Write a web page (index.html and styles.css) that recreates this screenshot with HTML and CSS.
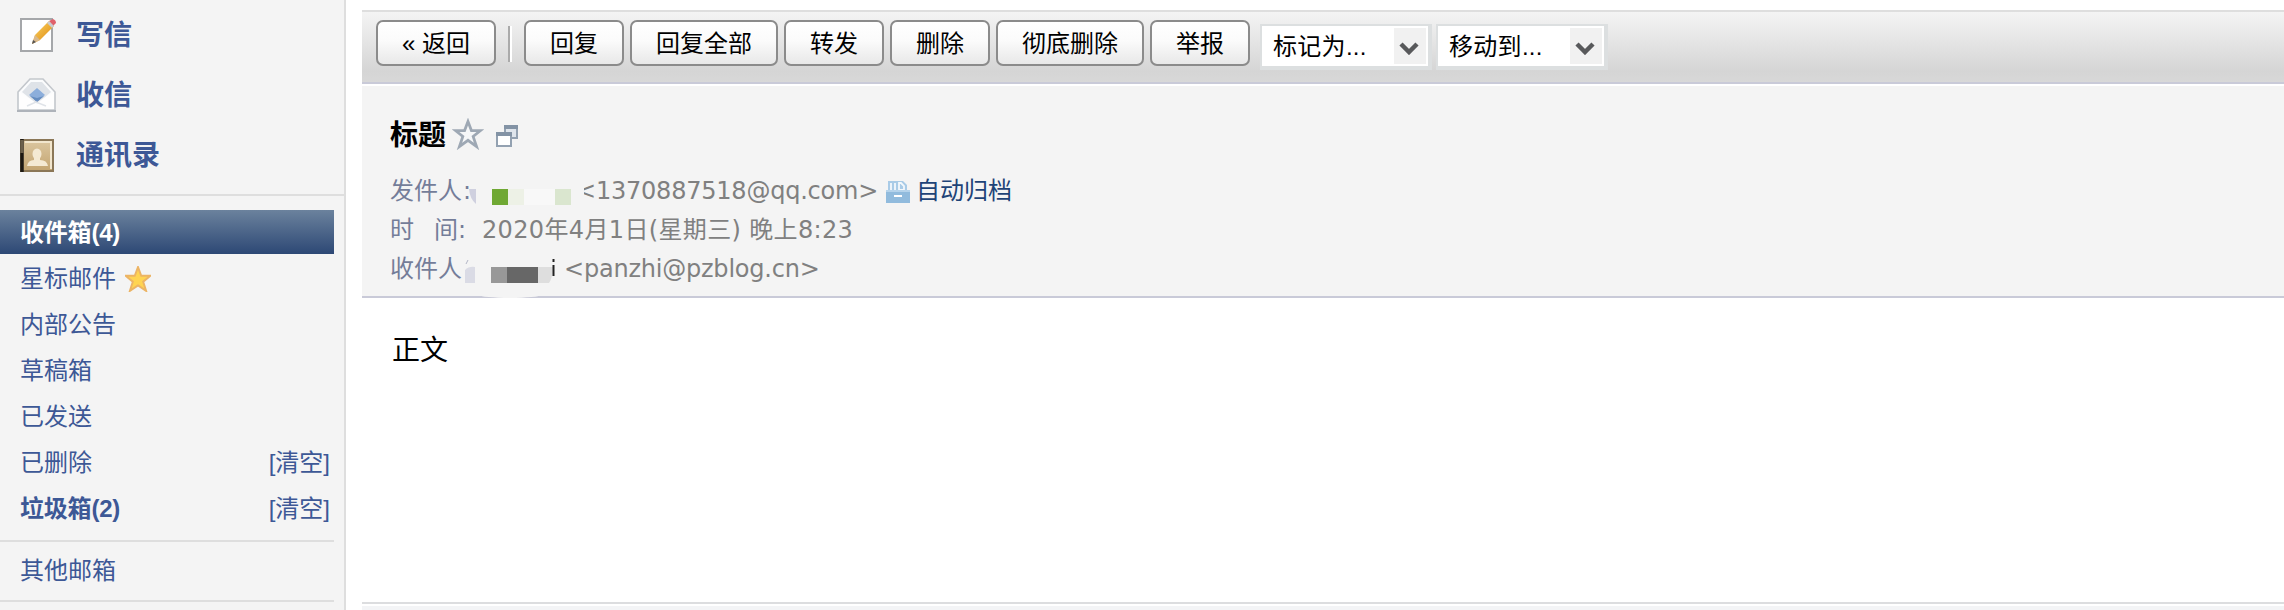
FILE: index.html
```
<!DOCTYPE html>
<html lang="zh-CN">
<head>
<meta charset="utf-8">
<title>收件箱</title>
<link rel="stylesheet" href="styles.css">
</head>
<body>
<div class="app">
  <aside class="sidebar">
    <nav class="actions">
      <a class="action"><svg class="action-icon" viewBox="0 0 40 40">
        <defs><linearGradient id="pencil" x1="0" y1="0" x2="1" y2="1"><stop offset="0" stop-color="#ffd968"/><stop offset="1" stop-color="#d98208"/></linearGradient></defs>
        <rect x="4" y="5" width="31" height="32" fill="#fff" stroke="#a5a7aa" stroke-width="2"/>
        <path d="M15 30l3-9L32 7l5 5-14 14z" fill="url(#pencil)"/><path d="M15 30l3-9 5 5z" fill="#d9b98c"/><path d="M15 30l1-4 3 2z" fill="#555"/><path d="M32 7l4-2q3 1 3 4l-3 3z" fill="#e0616b"/><path d="M30 9l2-2 5 5-2 2z" fill="#c8ccd2"/>
      </svg><span>写信</span></a>
      <a class="action"><svg class="action-icon" viewBox="0 0 40 40">
        <path d="M1 18L13 5h13l12 13v18H1z" fill="#fbfcfd" stroke="#c3c7cc" stroke-width="1.6"/>
        <path d="M5 18l9-10h11l9 10-14 12z" fill="#dfe3e8"/><path d="M13 22l7 6 7-6-7 3z" fill="#577fb4"/>
        <path d="M2 18l17 11 18-11v17H2z" fill="#fff" opacity=".65"/><path d="M12 21l8-7 8 7-8 6z" fill="#8caedb"/><path d="M13 22l7 5 7-5-7 2z" fill="#668dc0"/><path d="M10 32l9-4 10 4" fill="none" stroke="#dfe3e8" stroke-width="1.5"/><path d="M0 37h39" stroke="#aeb3ba" stroke-width="2"/>
      </svg><span>收信</span></a>
      <a class="action"><svg class="action-icon" viewBox="0 0 40 40">
        <defs><linearGradient id="book" x1="0" y1="0" x2="0" y2="1"><stop offset="0" stop-color="#dcc7a0"/><stop offset="1" stop-color="#c3a471"/></linearGradient></defs>
        <rect x="4" y="6" width="32" height="31" fill="url(#book)" stroke="#8b7757" stroke-width="2"/><path d="M8 8h26v27" fill="none" stroke="#f2e6cd" stroke-width="2"/><path d="M5 5v33" stroke="#1d1812" stroke-width="3.5"/><path d="M5 6v13" stroke="#6b5f4b" stroke-width="3.5"/>
        <ellipse cx="20" cy="20" rx="4.500" ry="5.500" fill="#f4e9d3"/><path d="M10 32q1-6 7-6v-3h6v3q7 0 8 6z" fill="#f4e9d3"/>
      </svg><span>通讯录</span></a>
    </nav>
    <nav class="folders">
      <a class="folder selected">收件箱(4)</a>
      <a class="folder">星标邮件<svg class="star-icon" viewBox="0 0 24 24"><path d="M12 1l3 8h8.500l-6.700 5.500L19.500 23 12 18 4.500 23l2.700-8.500L.5 9H9z" fill="#ffd451" stroke="#ecb465" stroke-width="1.8"/></svg></a>
      <a class="folder">内部公告</a>
      <a class="folder">草稿箱</a>
      <a class="folder">已发送</a>
      <a class="folder">已删除<span class="clear">[清空]</span></a>
      <a class="folder unread">垃圾箱(2)<span class="clear">[清空]</span></a>
    </nav>
    <div class="other">其他邮箱</div>
  </aside>
  <main class="main">
    <div class="toolbar">
      <button class="btn back">« 返回</button>
      <span class="separator"></span>
      <button class="btn">回复</button>
      <button class="btn wide">回复全部</button>
      <button class="btn">转发</button>
      <button class="btn">删除</button>
      <button class="btn wide">彻底删除</button>
      <button class="btn">举报</button>
      <div class="select first"><span>标记为...</span><i class="arrow"><svg viewBox="0 0 20 14"><path d="M2 3l8 8 8-8" fill="none" stroke="#58595b" stroke-width="4.500"/></svg></i></div>
      <div class="select"><span>移动到...</span><i class="arrow"><svg viewBox="0 0 20 14"><path d="M2 3l8 8 8-8" fill="none" stroke="#58595b" stroke-width="4.500"/></svg></i></div>
    </div>
    <header class="mail-head">
      <h1 class="subject"><span>标题</span>
        <svg class="subject-star" viewBox="0 0 28 28"><path d="M14 3l3 8h8l-6.500 5.200L21.500 25 14 19.500 6.500 25l3-8.800L3 11h8z" fill="#f6f7f8" stroke="#9ea8b4" stroke-width="2.400"/></svg>
        <svg class="subject-window" viewBox="0 0 24 24"><path d="M10 2h12v12H10z" fill="#dfe5ec" stroke="#93a1b1" stroke-width="2"/><path d="M9 3h14" stroke="#8393a5" stroke-width="4"/><path d="M2 9h14v13H2z" fill="#fff" stroke="#93a1b1" stroke-width="2"/><path d="M1 10h16" stroke="#8393a5" stroke-width="4"/></svg>
      </h1>
      <div class="field sender"><span class="label">发件人<b class="colon">:</b></span>
        <svg class="mask" viewBox="0 0 120 38"><path d="M0 18h7v15Q1 28 0 18z" fill="#cfd0df"/><rect x="23" y="18" width="16" height="16" fill="#6fa833"/><rect x="39" y="18" width="16" height="16" fill="#edf1e6"/><rect x="55" y="18" width="31" height="16" fill="#f8f8f8"/><rect x="86" y="18" width="16" height="16" fill="#dae6cf"/></svg>
        <span class="value address">&lt;1370887518@qq.com&gt;</span>
        <svg class="archive-icon" viewBox="0 0 24 22"><path d="M2 0h15l4 4v8H2z" fill="#a9cbe7"/><path d="M5 2v7M9 2v7M13 2v7h5V5l-3-3z" fill="none" stroke="#f3f8fc" stroke-width="1.800"/><path d="M0 9h24v13H0z" fill="#91bbdd"/><path d="M0 10h24" stroke="#b5d3eb" stroke-width="2"/><path d="M8 15h8" stroke="#fff" stroke-width="2"/></svg>
        <a class="archive">自动归档</a></div>
      <div class="field time"><span class="label spread"><span>时</span><span>间</span><b class="colon">:</b></span><span class="value date">2020年4月1日(星期三) 晚上8:23</span></div>
      <div class="field receiver"><span class="label">收件人</span>
        <svg class="mask" viewBox="0 0 120 38"><path d="M3 11l-2 4" stroke="#b3b6c6"/><path d="M0 21q4-4 10-3v16H0q-3-6 0-13z" fill="#dadbe5"/><rect x="26" y="18" width="16" height="16" fill="#989898"/><rect x="42" y="18" width="31" height="16" fill="#676767"/><path d="M73 18h15q0 10-4 16H73z" fill="#dedede"/><path d="M88.500 10v3M88.500 16v11" stroke="#222" stroke-width="2"/></svg>
        <span class="value address">&lt;panzhi@pzblog.cn&gt;</span></div>
      <span class="smudge"></span>
    </header>
    <article class="mail-body">正文</article>
    <footer class="mail-foot"></footer>
  </main>
</div>
</body>
</html>
```
FILE: styles.css
```
* { box-sizing: border-box; }
body {
  margin: 0;
  overflow: hidden;
  background: #fff;
  font: 24px/44px "Liberation Sans", "Noto Sans CJK SC", sans-serif;
}
.app { display: flex; height: 610px; }

.sidebar {
  flex: 0 0 346px;
  background: #f4f4f4;
  border-right: 2px solid #dedede;
  color: #3d5896;
}
.actions { height: 196px; padding-top: 4px; border-bottom: 2px solid #dedede; }
.action {
  display: flex;
  align-items: center;
  height: 60px;
  padding-left: 17px;
  gap: 19px;
  font-size: 28px;
  font-weight: bold;
}
.action span { padding-top: 3px; }
.action-icon { width: 40px; height: 40px; }
.folders { width: 334px; height: 346px; padding-top: 14px; border-bottom: 2px solid #dedede; }
.folder {
  display: flex;
  align-items: center;
  height: 44px;
  margin-bottom: 2px;
  padding: 2px 4px 0 20px;
}
.selected {
  background: linear-gradient(#6b829d, #2d4875);
  color: #fff;
  font-weight: bold;
}
.selected, .unread { letter-spacing: -0.2px; }
.unread { font-weight: bold; }
.star-icon { width: 26px; height: 26px; margin-left: 9px; }
.clear { margin-left: auto; font-weight: normal; letter-spacing: 0; }
.other { width: 334px; height: 60px; padding: 7px 0 0 20px; border-bottom: 2px solid #dedede; }

.main { flex: 1; margin-left: 16px; padding-top: 10px; }
.toolbar {
  display: flex;
  align-items: flex-start;
  gap: 6px;
  height: 74px;
  padding: 8px 0 0 14px;
  border-top: 2px solid #dedede;
  border-bottom: 2px solid #c9cad8;
  background: linear-gradient(#f4f4f4, #d5d5d5 85%, #d8d8d8);
}
.btn {
  flex: none;
  width: 100px;
  height: 46px;
  padding: 1px 0 0;
  border: 2px solid #8b8b8b;
  border-radius: 7px;
  background: linear-gradient(#fff, #fbfbfb 45%, #e8e8e8);
  color: #000;
  font: inherit;
  line-height: 41px;
}
.back { width: 120px; }
.wide { width: 148px; }
.separator {
  width: 4px;
  height: 36px;
  margin: 6px 6px 0;
  border-left: 2px solid #aaa;
  background: #fff;
}
.select {
  display: flex;
  justify-content: space-between;
  width: 172px;
  height: 46px;
  margin: 4px 0 0 -2px;
  padding: 2px 2px 2px 11px;
  border: solid #dcdfe0;
  border-width: 2px 4px 4px 2px;
  background: #fff;
  line-height: 37px;
}
.select span { letter-spacing: 0.3px; }
.select.first { margin-left: 4px; }
.arrow { display: grid; place-items: center; width: 32px; height: 36px; background: #f1f1f1; }
.arrow svg { width: 20px; height: 14px; margin: 3px 2px 0 0; }

.mail-head {
  position: relative;
  height: 214px;
  padding: 28px 0 0 28px;
  border-top: 2px solid #fff;
  border-bottom: 2px solid #c9cad8;
  background: #f4f4f4;
}
.subject {
  display: flex;
  align-items: center;
  height: 40px;
  margin: 0 0 17px;
  font-size: 28px;
}
.subject span { padding-top: 3px; }
.subject-star { width: 32px; height: 32px; margin-left: 6px; }
.subject-window { width: 24px; height: 24px; margin: 3px 0 0 11px; }
.field { display: flex; align-items: center; height: 38px; color: #808080; white-space: nowrap; }
.time { height: 40px; }
.label, .value, .archive { padding-top: 2px; }
.label { flex: none; color: #747d99; }
.colon { font-weight: normal; font-family: "DejaVu Sans", sans-serif; }
.sender .label { width: 79px; }
.receiver .label { width: 75px; }
.sender .colon { margin-left: 1px; }
.spread { display: flex; width: 92px; }
.spread span + span { margin-left: 20px; }
.mask { flex: none; width: 120px; height: 38px; }
.value { font-family: "DejaVu Sans", "Noto Sans CJK SC", sans-serif; }
.address { letter-spacing: -0.22px; }
.sender .address { margin-left: -13px; width: 310px; clip-path: inset(0 0 0 8px); }
.receiver .address { margin-left: -21px; }
.date { letter-spacing: 0.35px; }
.archive-icon { width: 24px; height: 22px; margin-top: 3px; }
.archive { margin-left: 6px; color: #1e4377; }
.smudge {
  position: absolute;
  left: 118px;
  bottom: -2px;
  width: 60px;
  height: 3px;
  border-radius: 0 0 50% 50% / 0 0 100% 100%;
  background: #f4f4f4;
}
.mail-body { height: 304px; padding: 31px 30px; font-size: 28px; }
.mail-foot { height: 8px; border-top: 2px solid #dcdddf; background: linear-gradient(#fff 2px, #f3f4f6 2px); }
```
